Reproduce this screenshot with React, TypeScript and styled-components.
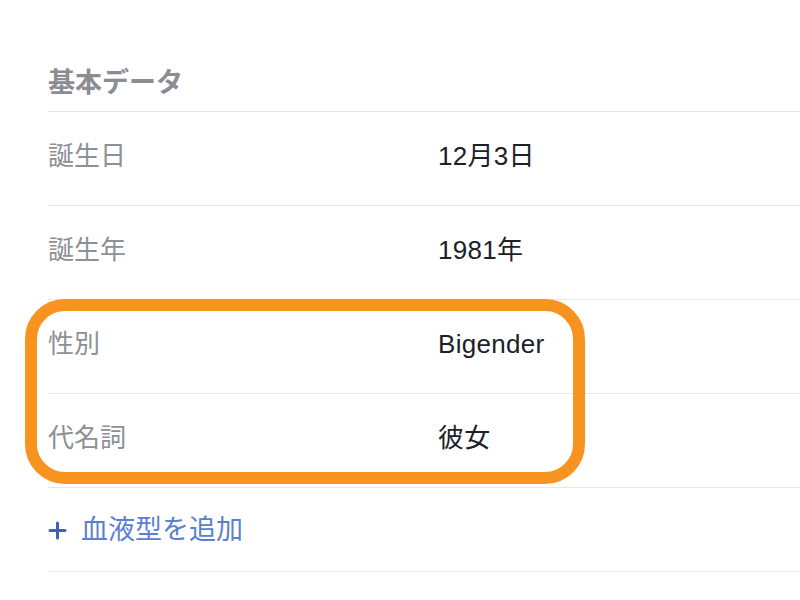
import styled, { createGlobalStyle } from 'styled-components';

const GlobalStyle = createGlobalStyle`
  html, body {
    margin: 0;
    padding: 0;
    background: #ffffff;
  }
  body {
    font-family: 'Liberation Sans', 'Noto Sans CJK JP', sans-serif;
    -webkit-font-smoothing: antialiased;
  }
`;

interface Field {
  label: string;
  value: string;
}

const basics: Field[] = [
  { label: '誕生日', value: '12月3日' },
  { label: '誕生年', value: '1981年' },
];

const highlighted: Field[] = [
  { label: '性別', value: 'Bigender' },
  { label: '代名詞', value: '彼女' },
];

export default function App() {
  return (
    <>
      <GlobalStyle />
      <Page>
        <Section>
          <Heading>基本データ</Heading>
          {basics.map((f) => (
            <Row key={f.label}>
              <Label>{f.label}</Label>
              <Value>{f.value}</Value>
            </Row>
          ))}
          <Highlight>
            {highlighted.map((f) => (
              <Row key={f.label}>
                <Label>{f.label}</Label>
                <Value>{f.value}</Value>
              </Row>
            ))}
          </Highlight>
          <AddRow>
            <svg width="19" height="19" viewBox="0 0 19 19">
              <path
                d="M9.5 2 V17 M2 9.5 H17"
                stroke="#3b64b4"
                strokeWidth="3"
                strokeLinecap="round"
              />
            </svg>
            <AddText>血液型を追加</AddText>
          </AddRow>
        </Section>
      </Page>
    </>
  );
}

const Page = styled.div`
  width: 800px;
  height: 600px;
  overflow: hidden;
  background: #fff;
`;

const Section = styled.div`
  padding-left: 48px;
  padding-top: 67px;
`;

const Heading = styled.div`
  font-size: 27px;
  line-height: 32px;
  font-weight: bold;
  color: #8a8d93;
  padding-bottom: 12px;
  border-bottom: 1px solid #e3e4e6;
`;

const Row = styled.div`
  display: grid;
  grid-template-columns: 390px 1fr;
  padding: 29px 0 34px;
  line-height: 30px;
  font-size: 26px;
  border-bottom: 1px solid #e6e7e9;
`;

const Label = styled.div`
  color: #8d9096;
`;

const Value = styled.div`
  color: #1d2129;
  letter-spacing: 0.3px;
`;

const Highlight = styled.div`
  position: relative;

  &::after {
    content: '';
    position: absolute;
    left: -23px;
    top: -1px;
    width: 560px;
    height: 185px;
    box-sizing: border-box;
    border: 12px solid #f7931e;
    border-radius: 40px;
    pointer-events: none;
  }
`;

const AddRow = styled.div`
  display: flex;
  align-items: center;
  gap: 14px;
  padding: 27px 0 26px;
  line-height: 30px;
  border-bottom: 1px solid #e6e7e9;
`;

const AddText = styled.span`
  font-size: 27px;
  color: #5b80cf;
`;
